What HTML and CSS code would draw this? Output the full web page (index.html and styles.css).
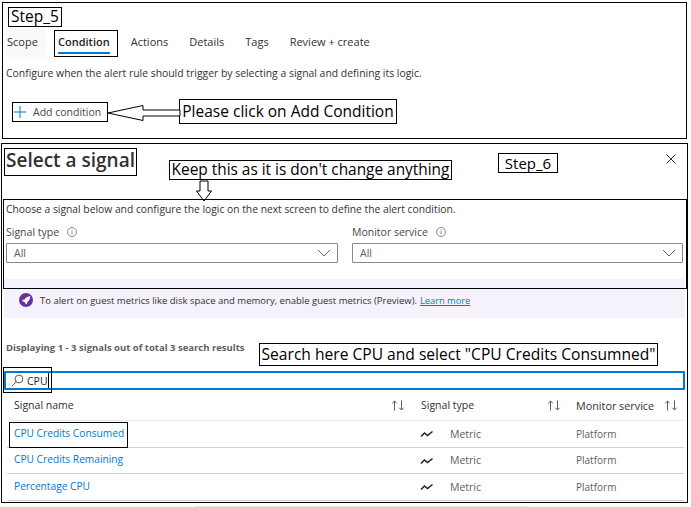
FILE: index.html
```html
<!DOCTYPE html>
<html lang="en">
<head>
<meta charset="utf-8">
<title>Step 5 and Step 6</title>
<link rel="stylesheet" href="styles.css">
</head>
<body>
<main class="page">
  <section class="panel step5">
    <nav class="tabs">
      <span class="tab tab-scope">Scope</span>
      <span class="tab tab-active">Condition</span>
      <span class="tab">Actions</span>
      <span class="tab">Details</span>
      <span class="tab">Tags</span>
      <span class="tab">Review + create</span>
    </nav>
    <p class="configure">Configure when the alert rule should trigger by selecting a signal and defining its logic.</p>
    <button class="add-btn">
      <svg class="plus" width="12" height="12" viewBox="0 0 12 12"><path d="M6 0v12M0 6h12" stroke="#0078d4" fill="none"/></svg>
      <span>Add condition</span>
    </button>
  </section>

  <section class="panel step6">
    <header class="head">
      <h1 class="title">Select a signal</h1>
      <svg class="close" width="10" height="10" viewBox="0 0 10 10"><path d="M.5.5l9 9M9.500.5l-9 9" stroke="#323130" fill="none"/></svg>
    </header>
    <p class="choose">Choose a signal below and configure the logic on the next screen to define the alert condition.</p>
    <div class="filters">
      <div class="filter">
        <label class="filter-label">Signal type
          <svg class="info" width="10" height="10" viewBox="0 0 10 10"><circle cx="5" cy="5" r="4.5" stroke="#8a8886" fill="none"/><path d="M5 4.2v3.2M5 2.4v1" stroke="#8a8886" fill="none"/></svg>
        </label>
        <div class="select"><span>All</span>
          <svg width="14" height="8" viewBox="0 0 14 8"><path d="M1 1l6 6 6-6" stroke="#605e5c" fill="none"/></svg>
        </div>
      </div>
      <div class="filter filter-right">
        <label class="filter-label">Monitor service
          <svg class="info" width="10" height="10" viewBox="0 0 10 10"><circle cx="5" cy="5" r="4.5" stroke="#8a8886" fill="none"/><path d="M5 4.2v3.2M5 2.4v1" stroke="#8a8886" fill="none"/></svg>
        </label>
        <div class="select"><span>All</span>
          <svg width="14" height="8" viewBox="0 0 14 8"><path d="M1 1l6 6 6-6" stroke="#605e5c" fill="none"/></svg>
        </div>
      </div>
    </div>
    <div class="notice">
      <svg class="rocket" width="14" height="14" viewBox="0 0 14 14"><circle cx="7" cy="7" r="7" fill="#6b2f9e"/><path d="M10.8 3.2C8.6 3.3 6.8 4.4 5.6 6.4L4 6.8 3 8.3l1.8.2 1.7 1.7.2 1.3 1.4-1.1.4-1.6c2-1.2 2.7-3.4 2.7-6.600z" fill="#fff"/></svg>
      <span>To alert on guest metrics like disk space and memory, enable guest metrics (Preview).</span>
      <a class="link" href="#">Learn more</a>
    </div>
    <p class="displaying">Displaying 1 - 3 signals out of total 3 search results</p>
    <div class="search">
      <svg class="lens" width="13" height="13" viewBox="0 0 13 13"><circle cx="8" cy="5" r="3.9" stroke="#605e5c" fill="none"/><path d="M5.2 7.8L.8 12.2" stroke="#605e5c" fill="none"/></svg>
      <span class="search-value">CPU</span><span class="caret"></span>
    </div>
    <div class="table">
      <div class="row row-head">
        <span>Signal name</span>
        <svg class="sort" width="14" height="11" viewBox="0 0 14 11"><path d="M3.500 10.500V1M1.200 3.300L3.500 1l2.300 2.300M10.500.5V10M8.200 7.700l2.300 2.300 2.300-2.300" stroke="#605e5c" fill="none"/></svg>
        <span>Signal type</span>
        <svg class="sort" width="14" height="11" viewBox="0 0 14 11"><path d="M3.500 10.500V1M1.200 3.300L3.500 1l2.300 2.300M10.500.5V10M8.200 7.700l2.300 2.300 2.300-2.300" stroke="#605e5c" fill="none"/></svg>
        <span class="monitor-head">Monitor service</span>
        <svg class="sort" width="14" height="11" viewBox="0 0 14 11"><path d="M3.500 10.500V1M1.200 3.300L3.500 1l2.300 2.300M10.500.5V10M8.200 7.700l2.300 2.300 2.300-2.300" stroke="#605e5c" fill="none"/></svg>
      </div>
      <div class="row">
        <a class="link-plain" href="#">CPU Credits Consumed</a><span></span>
        <span class="type"><svg width="14" height="9" viewBox="0 0 14 9"><path d="M1 7.500l3.500-3.500 3 2.500 5-4" stroke="#201f1e" stroke-width="1.5" fill="none"/></svg>Metric</span><span></span>
        <span class="muted">Platform</span><span></span>
      </div>
      <div class="row">
        <a class="link-plain" href="#">CPU Credits Remaining</a><span></span>
        <span class="type"><svg width="14" height="9" viewBox="0 0 14 9"><path d="M1 7.500l3.500-3.500 3 2.500 5-4" stroke="#201f1e" stroke-width="1.5" fill="none"/></svg>Metric</span><span></span>
        <span class="muted">Platform</span><span></span>
      </div>
      <div class="row">
        <a class="link-plain" href="#">Percentage CPU</a><span></span>
        <span class="type"><svg width="14" height="9" viewBox="0 0 14 9"><path d="M1 7.500l3.500-3.500 3 2.500 5-4" stroke="#201f1e" stroke-width="1.5" fill="none"/></svg>Metric</span><span></span>
        <span class="muted">Platform</span><span></span>
      </div>
    </div>
  </section>

  <div class="baseline-shadow"></div>

  <!-- Annotations drawn on top of the screenshots -->
  <span class="note note-step5">Step_5</span>
  <span class="mark mark-condition"></span>
  <span class="mark mark-add"></span>
  <span class="note note-click">Please click on Add Condition</span>
  <svg class="arrow arrow-left" width="74" height="18" viewBox="0 0 74 18"><path d="M1 9L36 1.5v4.500h37v6H36v4.500z" fill="#fff" stroke="#000"/></svg>
  <span class="mark mark-title"></span>
  <span class="note note-keep">Keep this as it is don't change anything</span>
  <svg class="arrow arrow-down" width="18" height="22" viewBox="0 0 18 22"><path d="M9 21L1.500 11h3.500V1h8v10h3.500z" fill="#fff" stroke="#000"/></svg>
  <span class="note note-step6">Step_6</span>
  <span class="mark mark-region"></span>
  <span class="note note-search">Search here CPU and select "CPU Credits Consumned"</span>
  <span class="mark mark-cpu"></span>
  <span class="mark mark-row"></span>
</main>
</body>
</html>
```
FILE: styles.css
```css
* { box-sizing: border-box; }
html, body { margin: 0; padding: 0; background: #fff; }
body { font-family: "Open Sans", "Noto Sans", sans-serif; color: #323130; font-size: 10.5px; }
.page { position: relative; width: 691px; height: 507px; overflow: hidden; padding-top: 2px; }
p { margin: 0; }

.panel { border: 1px solid #000; background: #fff; }
.step5 { width: 685px; height: 137px; margin-left: 2px; padding: 25px 3px 0; }
.tabs { display: flex; height: 29px; }
.tab { padding: 6px 0 0; margin-right: 21px; font-size: 11px; color: #323130; }
.tab-scope { background: #f9f9f9; width: 40px; margin-right: 12px; padding-left: 1px; }
.tab-active { font-weight: 600; border-bottom: 2px solid #0078d4; height: 26px; margin-right: 21px; color: #201f1e; }
.configure { margin-top: 9px; font-size: 10.4px; color: #323130; line-height: 14px; }
.add-btn { display: flex; align-items: center; gap: 7px; margin: 22px 0 0 8px; padding: 0; width: 95px; height: 19px; border: 0; background: #fff; font: inherit; color: #484644; font-size: 10.5px; }

.step6 { width: 687px; height: 360px; margin: 4px 0 0 1px; padding: 0 2px; }
.head { display: flex; justify-content: space-between; align-items: flex-start; height: 58px; padding: 3px 9px 0 2px; }
.title { margin: 0; font-size: 19px; line-height: 27px; font-weight: 600; color: #323130; }
.close { margin-top: 7px; }
.choose { font-size: 10.3px; line-height: 14px; padding-left: 2px; color: #323130; }
.filters { display: flex; justify-content: space-between; margin-top: 7px; padding-left: 2px; }
.filter { width: 332px; }
.filter-right { width: 331px; margin-right: 2px; }
.filter-label { display: flex; align-items: center; gap: 8px; height: 18px; font-size: 10.5px; color: #484644; }
.info { flex: none; }
.select { display: flex; align-items: center; justify-content: space-between; height: 20px; margin-top: 2px; padding: 0 6px 0 7px; border: 1px solid #8a8886; border-radius: 1px; font-size: 10.5px; color: #605e5c; }
.notice { display: flex; align-items: center; height: 39px; margin-top: 16px; padding: 11px 0 8px 15px; background: #f6f2fb; font-size: 9.5px; color: #323130; }
.rocket { flex: none; margin-right: 7px; }
.link { margin-left: 3px; color: #0078d4; text-decoration: underline; font-size: 9.3px; }
.displaying { margin-top: 23px; padding-left: 2px; font-size: 9.5px; line-height: 14px; font-weight: 700; color: #605e5c; }
.search { display: flex; align-items: center; height: 19px; margin-top: 16px; padding-left: 5px; border: 2px solid #0078d4; border-radius: 1px; font-size: 10.5px; color: #201f1e; }
.lens { margin-right: 3px; }
.caret { width: 1px; height: 15px; background: #000; }

.table { padding: 0 1px 0 3px; }
.row { display: grid; grid-template-columns: 376px 31px 125px 30px 87px 1fr; align-items: center; height: 26.500px; padding-left: 7px; border-bottom: 1px solid #d2d0ce; }
.row-head { height: 31px; font-size: 10.5px; color: #323130; border-bottom-color: #edebe9; }
.monitor-head { font-size: 10.8px; }
.sort { margin-left: 1px; }
.link-plain { margin-bottom: 2px; color: #0078d4; text-decoration: none; font-size: 10.2px; }
.type { display: flex; align-items: center; gap: 16px; margin-left: -1px; color: #605e5c; font-size: 10.5px; }
.muted { color: #605e5c; font-size: 10px; }
.baseline-shadow { height: 1px; width: 332px; margin: 3px 0 0 195px; background: #e4e4e4; }

/* Annotations */
.note, .mark { position: absolute; border: 1px solid #000; }
.note { background: #fff; color: #000; font-family: "Open Sans", "Noto Sans", sans-serif; white-space: nowrap; line-height: 1; display: flex; align-items: center; justify-content: center; }
.mark { background: transparent; }
.arrow { position: absolute; }
.note-step5 { left: 8px; top: 7px; width: 54px; height: 20px; font-size: 15.500px; }
.mark-condition { left: 54px; top: 30px; width: 64px; height: 27px; }
.mark-add { left: 12px; top: 102px; width: 96px; height: 20px; }
.note-click { left: 179px; top: 99px; width: 218px; height: 25px; font-size: 15.500px; }
.arrow-left { left: 107px; top: 104px; }
.mark-title { left: 4px; top: 148px; width: 133px; height: 28px; }
.note-keep { left: 169px; top: 160px; width: 283px; height: 20px; font-size: 15.400px; }
.arrow-down { left: 195px; top: 180px; }
.note-step6 { left: 498px; top: 153px; width: 60px; height: 20px; font-size: 15px; }
.mark-region { left: 3px; top: 199px; width: 684px; height: 90px; }
.note-search { left: 259px; top: 343px; width: 399px; height: 23px; font-size: 15.600px; }
.mark-cpu { left: 3px; top: 367px; width: 49px; height: 26px; }
.mark-row { left: 9px; top: 422px; width: 119px; height: 26px; }
```
